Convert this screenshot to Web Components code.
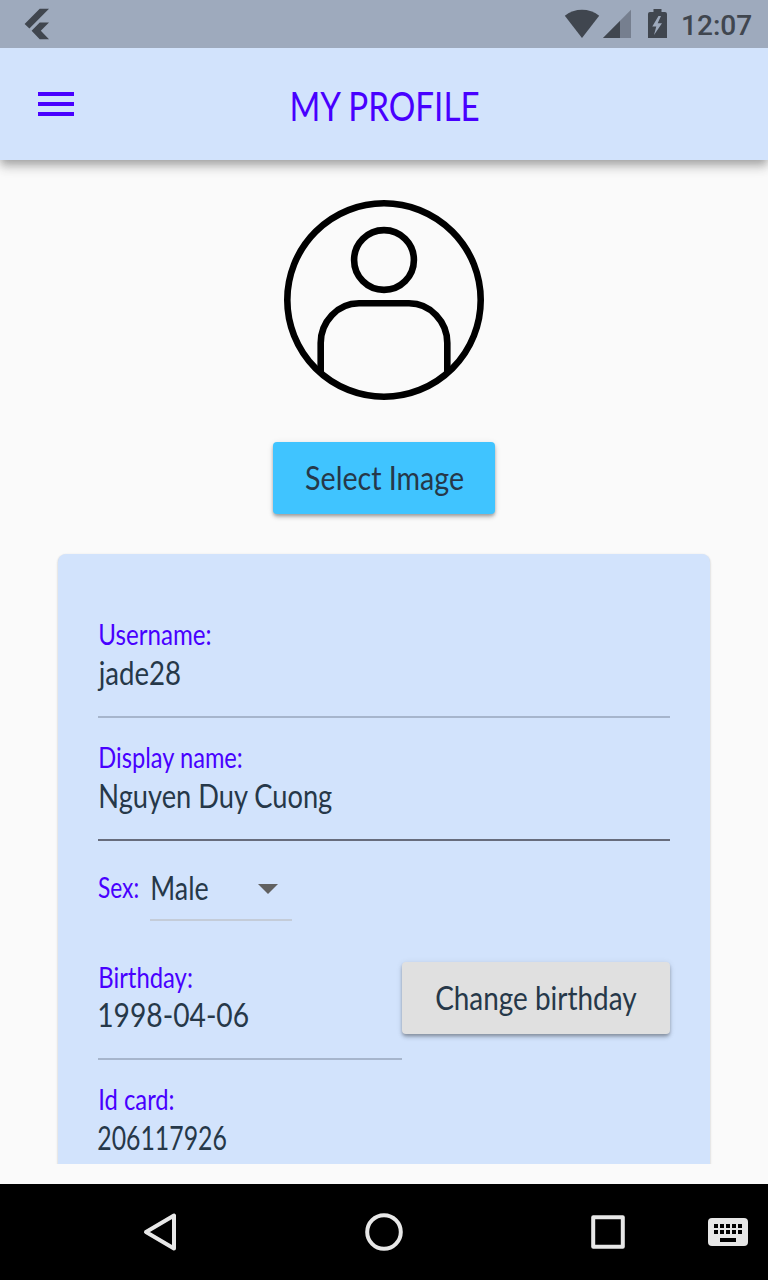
<!DOCTYPE html>
<html lang="en">
<head>
<meta charset="utf-8">
<title>My profile</title>
<style>
html, body { margin: 0; height: 100%; overflow: hidden; background: #fafafa; }
</style>
</head>
<body>
<profile-app></profile-app>
<script>
const define = (name, html, ready) => {
  const template = document.createElement('template');
  template.innerHTML = html;
  customElements.define(name, class extends HTMLElement {
    constructor() {
      super();
      this.attachShadow({ mode: 'open' }).append(template.content.cloneNode(true));
    }
    connectedCallback() { if (ready) ready(this, this.shadowRoot); }
  });
};

// One line of text, condensed so that its visible glyphs fill the given width.
define('fit-text', `<style>
:host { display: flex; flex: none; }
span { flex: none; white-space: pre; transform-origin: 0 0; }
</style><span></span>`, (host, root) => {
  const span = root.querySelector('span');
  const text = host.getAttribute('text');
  const ink = parseFloat(host.getAttribute('ink'));
  span.textContent = text;
  host.style.width = ink + 'px';
  const cs = getComputedStyle(host);
  const ctx = document.createElement('canvas').getContext('2d');
  ctx.font = cs.fontWeight + ' ' + cs.fontSize + ' ' + cs.fontFamily;
  const m = ctx.measureText(text);
  const k = ink / (m.actualBoundingBoxLeft + m.actualBoundingBoxRight);
  span.style.transform = 'translateX(' + m.actualBoundingBoxLeft * k + 'px) scaleX(' + k + ')';
});

define('status-bar', `
<style>
:host { display: flex; height: 48px; background: #9eaabd; color: #40464f; align-items: flex-start; position: relative; z-index: 2; }
svg { display: block; flex: none; fill: currentColor; }
.gap { flex: 1; }
fit-text { font: 500 28px/34px Roboto, sans-serif; margin: 9px 17px 0 0; }
</style>
<svg width="60" height="48"><path d="M39.7 8.7H49L29.4 28.6L24.6 24z M39.7 22.4H49L40.8 30.8L49 39.3H39.7L31.6 30.8z"/></svg>
<div class="gap"></div>
<svg width="142.7" height="48" viewBox="540 0 142.7 48">
<path d="M564.8 15.8C574.8 7.8 589.2 7.8 599.2 15.8L582 38z"/>
<path d="M631 9.8V38H603z" opacity=".42"/><path d="M620 21V38H603z"/>
<path fill-rule="evenodd" d="M653.5 9H661.5V12H665Q667 12 667 14V38H648V14Q648 12 650 12H653.5z M658.5 16L652.3 26.5H656.3L654 35L662 23.3H657.7L661 16z"/>
</svg>
<fit-text text="12:07" ink="68.3"></fit-text>`);

define('app-bar', `
<style>
:host { display: grid; grid-template-columns: 112px 1fr 112px; height: 112px; background: #d2e3fc; color: #4800ff;
  box-shadow: 0 4px 8px -1px rgba(0,0,0,.2), 0 8px 10px rgba(0,0,0,.14), 0 2px 16px rgba(0,0,0,.1); position: relative; }
svg { display: block; fill: currentColor; }
fit-text { font-size: 40px; line-height: 48px; margin: 34px 0 0 179.5px; }
</style>
<svg width="112" height="112"><path d="M38 44H74V48H38z M38 54H74V58H38z M38 64H74V68H38z"/></svg>
<fit-text text="MY PROFILE" ink="188"></fit-text>`);

define('user-avatar', `
<style>:host { display: block; width: 200px; height: 200px; } svg { display: block; }</style>
<svg width="200" height="200" fill="none" stroke="#000" stroke-width="6.6">
<circle cx="100" cy="100" r="96.7"/><circle cx="100" cy="60" r="29.9"/>
<path d="M36.7 174V143Q36.7 127 47.8 115.2T75 103.3H125Q141 103.3 152.2 115.2T163.3 143V174"/>
</svg>`);

define('raised-button', `
<style>
:host { display: flex; flex: none; box-sizing: border-box; height: 72px; padding-top: 16px; border-radius: 4px;
  box-shadow: 0 2px 3px rgba(0,0,0,.18), 0 4px 5px -1px rgba(0,0,0,.18), 0 1px 6px rgba(0,0,0,.1); }
</style><slot></slot>`);

define('form-field', `
<style>
:host { display: block; border-bottom: 2px solid var(--rule, #a6b5cc); padding-bottom: 23px; }
.label { color: #4800ff; font-size: 28px; line-height: 34px; margin-bottom: var(--gap, 2px); }
</style>
<div class="label"><slot name="label"></slot></div><slot></slot>`);

define('drop-down', `
<style>
:host { display: flex; justify-content: space-between; box-sizing: border-box; width: 142px; height: 53px;
  padding: 0 14px 0 1.6px; border-bottom: 2px solid #c4ccd8; }
svg { display: block; margin-top: 16px; }
</style>
<slot></slot><svg width="20" height="10"><path fill="#616161" d="M0 0H20L10 10z"/></svg>`);

define('profile-card', `
<style>
:host { display: flex; flex-direction: column; box-sizing: border-box; width: 652px; height: 640px; margin: 40px auto 0;
  padding: 63px 40px 0; background: #d2e3fc; border-radius: 8px; color: #263849;
  box-shadow: 0 2px 1px -1px rgba(0,0,0,.15), 0 1px 2px rgba(0,0,0,.16), 0 1px 3px rgba(0,0,0,.1); }
form-field + form-field, .date + form-field { margin-top: 22px; }
.row { display: flex; align-items: flex-start; }
.sex { margin-top: 27px; }
.sex > fit-text { color: #4800ff; font-size: 28px; line-height: 34px; margin: 2px 11.7px 0 0; }
.date { margin-top: 39px; }
.date form-field { flex: 1; --gap: 1px; }
raised-button { width: 268px; margin-top: 2px; padding-left: 33.8px; background: #e0e0e0; }
.i { margin-left: 1.7px; } .n { margin-left: -1px; }
</style>
<form-field><fit-text class="i" slot="label" text="Username:" ink="110.7"></fit-text><fit-text class="n" text="jade28" ink="83.6"></fit-text></form-field>
<form-field style="--rule:#676c7c"><fit-text class="i" slot="label" text="Display name:" ink="142.5"></fit-text><fit-text class="i" text="Nguyen Duy Cuong" ink="232.4"></fit-text></form-field>
<div class="row sex"><fit-text text="Sex:" ink="40.3"></fit-text><drop-down><fit-text text="Male" ink="56"></fit-text></drop-down></div>
<div class="row date">
<form-field><fit-text class="i" slot="label" text="Birthday:" ink="92"></fit-text><fit-text style="margin-left:.7px" text="1998-04-06" ink="149.6"></fit-text></form-field>
<raised-button><fit-text text="Change birthday" ink="201"></fit-text></raised-button>
</div>
<form-field><fit-text class="i" slot="label" text="Id card:" ink="73.7"></fit-text><fit-text style="margin-left:.4px" text="206117926" ink="128.5"></fit-text></form-field>`);

define('nav-bar', `
<style>:host { display: block; height: 96px; background: #000; } svg { display: block; }</style>
<svg width="768" height="96" fill="none" stroke="#e8e8e8" stroke-width="4" stroke-linejoin="round">
<path d="M146 48L174 31.5V64.5z"/><circle cx="384" cy="48" r="16.8"/>
<rect x="593.2" y="33.2" width="29.6" height="29.6"/>
<rect x="708" y="34" width="40" height="28" rx="4" fill="#e6e6e6" stroke="none"/>
<path stroke="#000" stroke-linejoin="miter" stroke-dasharray="4 2" d="M714 42H742M714 48H742"/>
<path stroke="#000" d="M720 56H736"/>
</svg>`);

define('profile-app', `
<style>
:host { display: flex; flex-direction: column; width: 768px; height: 1280px; font: 32px/40px Lato, sans-serif; background: #fafafa; }
main { height: 1004px; flex: none; overflow: hidden; box-sizing: border-box; padding-top: 40px; }
user-avatar { margin: 0 auto; }
main > raised-button { width: 222px; margin: 42px auto 0; padding-left: 32.5px; background: #40c4ff; color: #263849; }
nav-bar { margin-top: 20px; }
</style>
<status-bar></status-bar><app-bar></app-bar>
<main>
<user-avatar></user-avatar>
<raised-button><fit-text text="Select Image" ink="157.3"></fit-text></raised-button>
<profile-card></profile-card>
</main>
<nav-bar></nav-bar>`);
</script>
</body>
</html>
